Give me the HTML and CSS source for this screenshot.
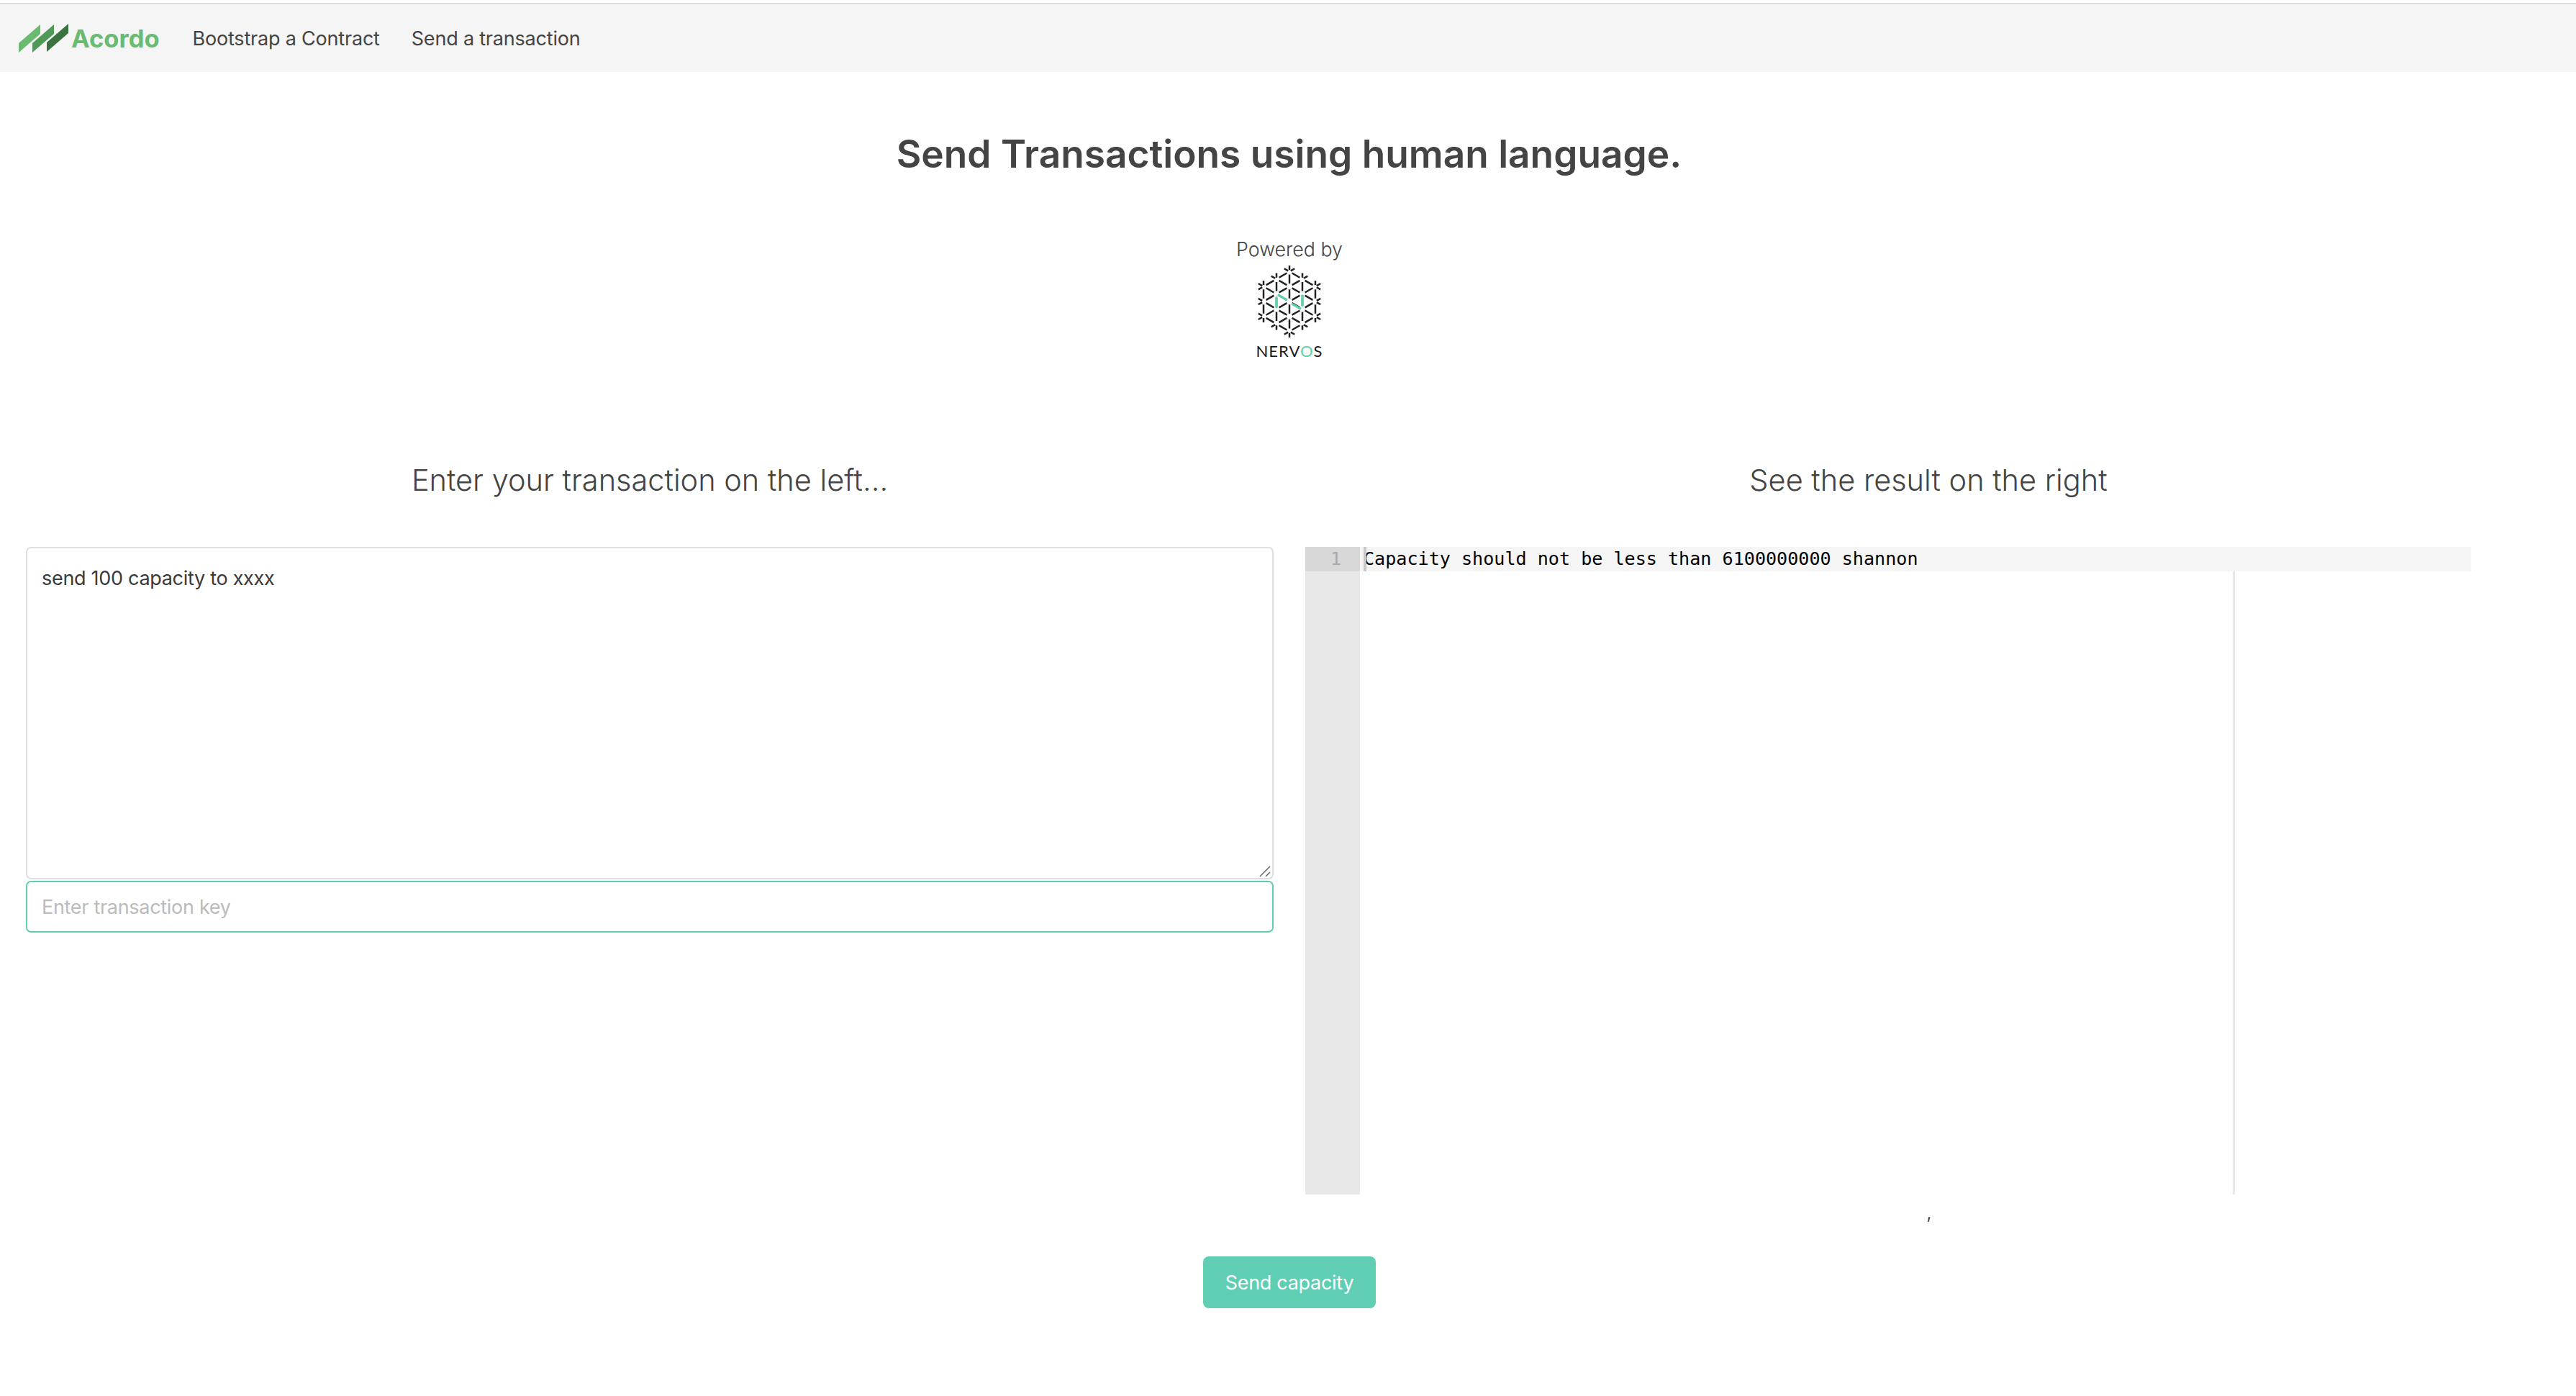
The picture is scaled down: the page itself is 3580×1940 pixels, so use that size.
FILE: index.html
```html
<!DOCTYPE html>
<html lang="en">
<head>
    <meta charset="UTF-8">
    <title>Acordo</title>
    <link rel="stylesheet" href="styles.css">
</head>
<body>

    <nav class="navbar">
        <a class="brand">
            <svg class="brand-mark" width="70" height="40" viewBox="0 0 70 40">
                <polygon points="0,27 30,1 30,14 0,40" fill="#6abb6f"/>
                <polygon points="19,27 49,1 49,14 19,40" fill="#4f9a57"/>
                <polygon points="39,26 69,0 69,13 39,39" fill="#3a7340"/>
            </svg>
            <span class="brand-name">Acordo</span>
        </a>
        <a class="nav-link">Bootstrap a Contract</a>
        <a class="nav-link">Send a transaction</a>
    </nav>

    <h1>Send Transactions using human language.</h1>

    <div class="powered">
        <p>Powered by</p>
        <svg class="nervos-mark" width="104" height="104" viewBox="-50 -50 100 100">
            <defs>
                <g id="dashes">
                    <path d="M0-48v6M0-36v12M0-16V-4M0 4v12M0 24v12M0 42v6"/>
                    <path d="M-17.3-38v6M-17.3-26v12M-17.3-6V6M-17.3 14v12M-17.3 32v6"/>
                    <path d="M17.3-38v6M17.3-26v12M17.3-6V6M17.3 14v12M17.3 32v6"/>
                    <path d="M-34.6-28v6M-34.6-16V-4M-34.6 4v12M-34.6 22v6"/>
                    <path d="M34.6-28v6M34.6-16V-4M34.6 4v12M34.6 22v6"/>
                </g>
            </defs>
            <g class="nervos-dark">
                <use href="#dashes"/>
                <use href="#dashes" transform="rotate(60)"/>
                <use href="#dashes" transform="rotate(120)"/>
            </g>
            <path class="nervos-green" d="M-17.3-6V9M17.3-9V6M-15.5-9-3-2M3 3 15.5 10"/>
        </svg>
        <div class="nervos-name">NERV<span>O</span>S</div>
    </div>

    <div class="columns">
        <div class="col-left">
            <h3>Enter your transaction on the left...</h3>
            <div class="tx-wrap">
                <textarea class="tx-text">send 100 capacity to xxxx</textarea>
                <svg class="grip" width="16" height="16" viewBox="0 0 16 16">
                    <path d="M1 15 15 1M9 15l6-6"/>
                </svg>
            </div>
            <input class="tx-key" type="text" placeholder="Enter transaction key">
        </div>
        <div class="col-right">
            <h3>See the result on the right</h3>
            <div class="editor">
                <div class="gutter"><div class="gutter-active">1</div></div>
                <div class="editor-body">
                    <div class="print-margin"></div>
                    <div class="active-line"><span class="cursor"></span>Capacity should not be less than 6100000000 shannon</div>
                </div>
            </div>
            <div class="stray">,</div>
        </div>
    </div>

    <div class="actions">
        <button>Send capacity</button>
    </div>

</body>
</html>
```

FILE: styles.css
```css
body {
    margin: 0;
    padding-top: 4px;
    font-family: Inter, "Liberation Sans", sans-serif;
    color: #444;
    background: #fff;
}
.navbar {
    display: flex;
    align-items: center;
    height: 94px;
    padding-left: 26px;
    background: #f5f5f5;
    border-top: 2px solid #dcdcdc;
}
.brand {
    display: flex;
    align-items: center;
    margin-right: 46px;
}
.brand-mark {
    display: block;
}
.brand-name {
    margin-left: 3px;
    font-size: 34.5px;
    font-weight: 700;
    color: #68bb70;
}
.nav-link {
    margin-right: 44px;
    font-size: 27px;
    letter-spacing: -0.2px;
    color: #444;
}
h1 {
    margin: 70px 0 0;
    padding-left: 3px;
    font-size: 53.2px;
    line-height: 88px;
    font-weight: 600;
    text-align: center;
    color: #444;
}
.powered {
    margin-top: 68px;
    padding-left: 4px;
    display: flex;
    flex-direction: column;
    align-items: center;
}
.powered p {
    margin: 0;
    font-size: 26.8px;
    line-height: 40px;
    font-weight: 300;
}
.nervos-mark {
    display: block;
    margin-top: 1px;
}
.nervos-dark {
    fill: none;
    stroke: #222;
    stroke-width: 2.4;
}
.nervos-green {
    fill: none;
    stroke: #5fd3a8;
    stroke-width: 3.2;
}
.nervos-name {
    margin-top: 4px;
    font-family: Lato, sans-serif;
    font-size: 22px;
    line-height: 26px;
    color: #1a1a1a;
    letter-spacing: 1px;
}
.nervos-name span {
    color: #5fd3a8;
}
.columns {
    display: grid;
    grid-template-columns: 1fr 1fr;
    margin-top: 138px;
}
h3 {
    margin: 0 0 65px;
    font-size: 41.5px;
    line-height: 56px;
    font-weight: 300;
    text-align: center;
    color: #444;
}
.col-left {
    padding: 0 20px 0 36px;
}
.tx-wrap {
    position: relative;
}
.tx-text {
    display: block;
    box-sizing: border-box;
    width: 100%;
    height: 462px;
    padding: 22px 20px;
    border: 2px solid #dfdfdf;
    border-radius: 7px;
    outline: none;
    resize: none;
    font-family: inherit;
    font-size: 27px;
    letter-spacing: -0.3px;
    line-height: 40px;
    color: #3a3a3a;
}
.grip {
    position: absolute;
    right: 4px;
    bottom: 3px;
    fill: none;
    stroke: #666;
    stroke-width: 1.5;
}
.tx-key {
    display: block;
    box-sizing: border-box;
    width: 100%;
    height: 72px;
    margin-top: 2px;
    padding: 0 20px;
    border: 2px solid #5fceb3;
    border-radius: 7px;
    outline: none;
    font-family: inherit;
    font-size: 27px;
    letter-spacing: -0.3px;
}
.tx-key::placeholder {
    color: #bbb;
}
.col-right h3 {
    padding-right: 10px;
}
.editor {
    display: flex;
    width: 1620px;
    height: 900px;
    margin-left: 24px;
    font-family: "DejaVu Sans Mono", monospace;
    font-size: 25.1px;
    line-height: 34px;
}
.gutter {
    width: 76px;
    background: #e8e8e8;
}
.gutter-active {
    padding-right: 26px;
    text-align: right;
    background: #d8d8d8;
    color: #aaa;
}
.editor-body {
    position: relative;
    flex: 1;
}
.active-line {
    position: relative;
    height: 34px;
    padding-left: 5px;
    background: #f5f5f5;
    color: #000;
    white-space: pre;
}
.cursor {
    position: absolute;
    left: 5px;
    top: 0;
    width: 4px;
    height: 34px;
    background: #c8c8c8;
}
.print-margin {
    position: absolute;
    top: 0;
    bottom: 0;
    left: 1213px;
    width: 3px;
    background: #e8e8e8;
}
.stray {
    width: 1782px;
    margin-top: 14px;
    text-align: center;
    font-size: 24px;
    line-height: 24px;
    color: #444;
}
.actions {
    margin-top: 48px;
    padding-left: 4px;
    display: flex;
    justify-content: center;
}
button {
    width: 240px;
    height: 72px;
    border: none;
    border-radius: 8px;
    background: #5fceb3;
    color: #fff;
    font-family: inherit;
    font-size: 27px;
    letter-spacing: -0.3px;
    font-weight: 400;
}
```
